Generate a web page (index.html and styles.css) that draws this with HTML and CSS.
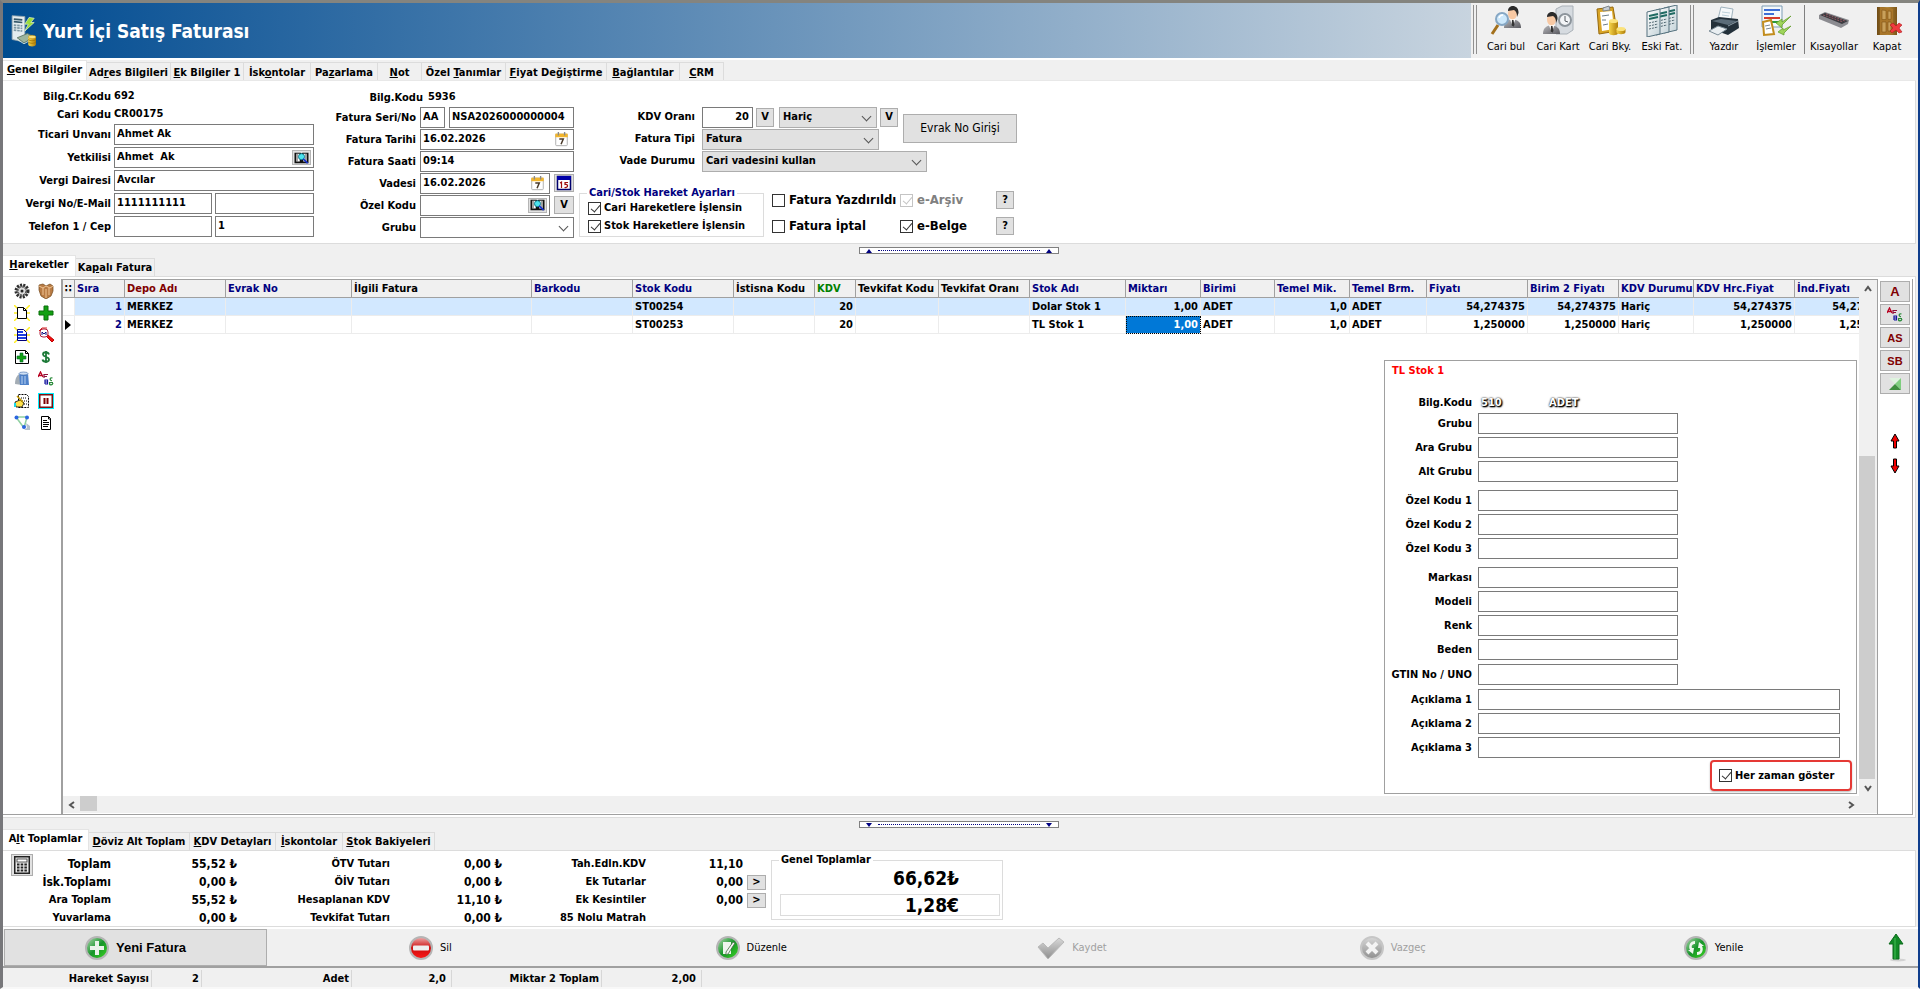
FILE: index.html
```html
<!DOCTYPE html>
<html lang="tr">
<head>
<meta charset="utf-8">
<title>Yurt İçi Satış Faturası</title>
<link rel="stylesheet" href="styles.css">
</head>
<body>
<svg class="sprite" aria-hidden="true">
  <defs>
    <linearGradient id="paper" x1="0" y1="0" x2="1" y2="1"><stop offset="0" stop-color="#ffffff"/><stop offset="1" stop-color="#c3d2d8"/></linearGradient>
    <linearGradient id="gold" x1="0" y1="0" x2="1" y2="0"><stop offset="0" stop-color="#f7d64a"/><stop offset="1" stop-color="#b07d08"/></linearGradient>
    <linearGradient id="suit" x1="0" y1="0" x2="1" y2="1"><stop offset="0" stop-color="#b9b9bd"/><stop offset="1" stop-color="#5a5a60"/></linearGradient>
    <linearGradient id="wood" x1="0" y1="0" x2="1" y2="0"><stop offset="0" stop-color="#6e4a14"/><stop offset="0.5" stop-color="#b58b3c"/><stop offset="1" stop-color="#7c5418"/></linearGradient>
    <linearGradient id="greenBall" x1="0" y1="0" x2="1" y2="1"><stop offset="0" stop-color="#b9dcb9"/><stop offset="0.5" stop-color="#17952a"/><stop offset="1" stop-color="#3edb20"/></linearGradient>
    <linearGradient id="redBall" x1="0" y1="0" x2="0" y2="1"><stop offset="0" stop-color="#efb0b0"/><stop offset="0.5" stop-color="#cc0d0d"/><stop offset="1" stop-color="#ff1a1a"/></linearGradient>
    <linearGradient id="greyBall" x1="0" y1="0" x2="0" y2="1"><stop offset="0" stop-color="#d8d8d8"/><stop offset="1" stop-color="#8e8e8e"/></linearGradient>
    <g id="person">
      <path d="M0 22c0-6 3-8 8-9c6 1 9 3 9 9z" fill="url(#suit)"/>
      <path d="M6 13l2.500 8l3-8z" fill="#fff"/><path d="M8 14h1.500l1 5l-1.500 2l-1.500-2z" fill="#333"/>
      <ellipse cx="8.500" cy="7.500" rx="4.500" ry="6" fill="#f8c9a4"/>
      <path d="M4 5c0-7 11-7 10.500 2l-1.500 4c0-4-1-6-3-7c-2 0-4 1-6 1z" fill="#2b2b2b"/>
    </g>
    <g id="sheet">
      <path d="M1 4l13-3v25l-13 3z" fill="url(#paper)" stroke="#54717e"/>
      <path d="M3 8l9-2M3 11l9-2" stroke="#1f6a62" stroke-width="2"/>
      <path d="M3 15l9-2M3 18l9-2M3 21l9-2" stroke="#4f6670" stroke-dasharray="2 1"/>
    </g>
    <symbol id="i-invoice" viewBox="0 0 32 40">
      <path d="M2 2l15 1v30l-15-3z" fill="#e4ecef" stroke="#8fa2ab"/>
      <path d="M4 6l10 1M4 9l10 1" stroke="#35586a" stroke-width="2"/><path d="M4 13l10 1M4 16l10 1M4 19l10 1" stroke="#7e97a3" stroke-width="2" stroke-dasharray="3 1"/>
      <path d="M22 4l6 1l-4 5l4 0l-11 10l4-8l-4 0z" fill="#9bdc3a" stroke="#e7f6c6" stroke-width=".8"/>
      <path d="M8 28l12-5l8 4l-12 7z" fill="#9db59d" stroke="#5c7463"/><path d="M8 30l8 5l11-6" fill="none" stroke="#e2eee2"/>
      <path d="M21 27v9c0 3 9 3 9 0v-9z" fill="url(#gold)"/><ellipse cx="25.500" cy="27" rx="4.500" ry="2" fill="#fbe27a" stroke="#b98709" stroke-width=".6"/><path d="M21 30c2 2 7 2 9 0M21 33c2 2 7 2 9 0" fill="none" stroke="#9b6d00" stroke-width=".8"/>
    </symbol>
    <symbol id="i-find" viewBox="0 0 32 32"><use href="#person" x="14" y="1"/><path d="M8 20l-6 9" stroke="#a3701c" stroke-width="3"/><circle cx="12" cy="14" r="6" fill="#cde8fb" stroke="#86a7c4" stroke-width="2"/><path d="M9 13q1-3 4-3" stroke="#fff" fill="none" stroke-width="1.500"/></symbol>
    <symbol id="i-card" viewBox="0 0 32 32"><path d="M14 4l6-3h11v24l-6 4h-11z" fill="#d6dbe0" stroke="#aab1b8"/><circle cx="23" cy="15" r="6" fill="#f3f5f7" stroke="#8d959c" stroke-width="2"/><path d="M23 11v5l3 1" stroke="#565d63" fill="none"/><use href="#person" x="1" y="7"/></symbol>
    <symbol id="i-balance" viewBox="0 0 32 32"><path d="M3 4l16-2l4 24l-18 3z" fill="#d9a425" stroke="#96690e"/><path d="M6 7l12-1l2 18l-12 2z" fill="#fff"/><path d="M9 3l6-2l1 4l-7 1z" fill="#c7cdd3" stroke="#7d858c"/><path d="M8 11l7-1M8 15l4 0M9 20l5-1" stroke="#6c7d88"/><path d="M15 16v12c0 3 9 3 9 0v-12z" fill="url(#gold)"/><ellipse cx="19.500" cy="16" rx="4.500" ry="2" fill="#fbe27a"/><path d="M22.500 24v3c0 3 9 3 9 0v-3z" fill="url(#gold)"/><ellipse cx="27" cy="24" rx="4.500" ry="2" fill="#fbe27a"/></symbol>
    <symbol id="i-old" viewBox="0 0 32 32"><use href="#sheet" x="17" y="-1"/><use href="#sheet" x="9" y="1"/><use href="#sheet" x="0" y="3"/></symbol>
    <symbol id="i-print" viewBox="0 0 32 32"><path d="M10 14l3-12l12 2l-2 12z" fill="#f5f8fa" stroke="#9fb2bd"/><path d="M14 7l8 1M14 10l7 1" stroke="#bcd0da"/><path d="M3 15l8-3l19 2l1 9l-11 7l-17-6z" fill="#23303a"/><path d="M4 16l9-2l16 2l-9 4z" fill="#5b6c79"/><path d="M20 21l10-5" stroke="#8c9ba6"/><path d="M1 26l9-5l9 3l-9 6z" fill="#e9eef1" stroke="#7b8c97"/></symbol>
    <symbol id="i-process" viewBox="0 0 32 32"><path d="M2 1h20v21h-20z" fill="#f4f8fb" stroke="#7d9db5"/><path d="M4 5h16M4 9h10" stroke="#3f6fd6" stroke-width="2"/><path d="M4 13h16" stroke="#d63a2a" stroke-width="2"/><path d="M8 17h13" stroke="#2a9a3b" stroke-width="2"/><path d="M3 17l8-2l3 14l-10 1z" fill="#fff" stroke="#c28c1c" stroke-width="2"/><path d="M5 21l5-1M6 24l5-1" stroke="#7d8a93"/><path d="M31 11l-9 6v-3l-6 4l6 5v-3zM31 21l-8 4v-2l-5 4l6 3v-2z" fill="#9fd45b" stroke="#5b9a22" stroke-width=".7"/></symbol>
    <symbol id="i-keyboard" viewBox="0 0 32 32"><path d="M1 10l6-3l24 8l-1 4l-7 4l-22-9z" fill="#8b8b90"/><path d="M2 10l5-2l23 8l-6 3z" fill="#3b3b40"/><path d="M5 10l20 7M8 9l19 7" stroke="#8f5860" stroke-dasharray="2 1"/></symbol>
    <symbol id="i-door" viewBox="0 0 32 32"><path d="M6 2h20v28h-20z" fill="url(#wood)"/><path d="M9 2l13 2v25l-13 1z" fill="#a9762a"/><path d="M11 5l4 .5v9h-4zM17 6l3 .3v8h-3zM11 17h4v10h-4zM17 17h3v9h-3z" fill="#c9a05a" stroke="#7f5517" stroke-width=".6"/><path d="M19 20l3-2l3 3l3-3l3 2l-3 3l3 4l-3 1l-3-3l-4 3l-2-2l3-3z" fill="#ee3b3f" stroke="#b3161c" stroke-width=".6"/></symbol>

    <symbol id="i-gear" viewBox="0 0 16 16"><circle cx="8" cy="8" r="6" fill="#b9b9b9" stroke="#2f2f2f" stroke-width="3" stroke-dasharray="2 1.200"/><circle cx="8" cy="8" r="4" fill="#dcdcdc" stroke="#333" stroke-dasharray="2 1"/><circle cx="8" cy="8" r="1.500" fill="#222"/></symbol>
    <symbol id="i-box" viewBox="0 0 16 16"><path d="M1 2l4-1l3 2l4-2l3 2v5l-2 5l-5 3l-5-3l-2-6z" fill="#b97c45" stroke="#714619" stroke-width=".7"/><path d="M1 3l4 2l3-2l4 2l3-2M5 5v7M8 6v9M11 5v7" fill="none" stroke="#f0c596"/></symbol>
    <symbol id="i-new" viewBox="0 0 16 16"><path d="M0 0l16 16M16 0l-16 16M0 8h16" stroke="#ffee22" stroke-width="1.500"/><path d="M3.500 2.500h6l3 3v8h-9z" fill="#fff" stroke="#000"/><path d="M9.500 2.500v3h3" fill="none" stroke="#000"/></symbol>
    <symbol id="i-newlines" viewBox="0 0 16 16"><path d="M0 0l16 16M16 0l-16 16M0 8h16" stroke="#ffee22" stroke-width="1.500"/><path d="M3.500 2.500h6l3 3v8h-9z" fill="#fff" stroke="#00007a"/><path d="M4 5h5M4 8h8M4 11h8" stroke="#1c3fe0" stroke-width="2"/></symbol>
    <symbol id="i-plus" viewBox="0 0 16 16"><path d="M6 1h4v5h5v4h-5v5h-4v-5h-5v-4h5z" fill="#12a012" stroke="#0b6e0b"/></symbol>
    <symbol id="i-probe" viewBox="0 0 16 16"><path d="M8 9l6 6l2-2l-6-5z" fill="#f01010" stroke="#c00000"/><rect x="2" y="2" width="8" height="8" rx="3" fill="#fff" stroke="#b01b3b"/><path d="M4 8v-3l2 2l2-2v3" fill="none" stroke="#101080"/><path d="M1 4l3-3h5" fill="none" stroke="#d02020"/></symbol>
    <symbol id="i-addpage" viewBox="0 0 16 16"><path d="M1.500 1.500h10l3 3v10h-13z" fill="#fff" stroke="#000"/><path d="M11.500 1.500v3h3" fill="none" stroke="#000"/><path d="M6 4h3v3h3v3h-3v3h-3v-3h-3v-3h3z" fill="#12a012" stroke="#063" stroke-width=".6"/></symbol>
    <symbol id="i-dollar" viewBox="0 0 16 16"><path d="M11 5.500c-1-3-6-3-6 0c0 2.500 6 2 6 5c0 3-6 3-6.500 0M8 2v12" fill="none" stroke="#1d7a38" stroke-width="1.800"/></symbol>
    <symbol id="i-bin" viewBox="0 0 16 16"><path d="M1 13c0-6 2-8 4-10l3 11z" fill="#a4adb5"/><path d="M5 2h9l1 12h-9z" fill="#4f82c9"/><ellipse cx="9.500" cy="2.500" rx="4.500" ry="1.500" fill="#cfe0f5" stroke="#3b68a8" stroke-width=".6"/><path d="M8 5v8M11 5v8" stroke="#b9d2f2"/></symbol>
    <symbol id="i-abc" viewBox="0 0 16 16"><path d="M0 6l2.500-5l2.500 5M1 4.500h3" fill="none" stroke="#b80020" stroke-width="1.300"/><path d="M6 7v-3.500h4M6 5.500h3" fill="none" stroke="#90103a" stroke-width="1.200"/><path d="M7 13v-4h2.500v2h-2.500M9.500 11v2h-2.500" fill="none" stroke="#1616a0" stroke-width="1.200"/><path d="M14.500 7c-3-1-3 3-.5 2.500M15 12c-1 3-4 2-3.500-.5h3.500" fill="none" stroke="#2a8a3a" stroke-width="1.200"/></symbol>
    <symbol id="i-edit" viewBox="0 0 16 16"><path d="M4.500 1.500h8l2 2v11h-10z" fill="#fff" stroke="#000" stroke-dasharray="2 1"/><path d="M7 5h6M8 8h5M8 11h5" stroke="#000" stroke-dasharray="1 1"/><path d="M1 9l5-2l4 3l-2 4h-6z" fill="#ffe14a" stroke="#000" stroke-width=".8"/><path d="M3 3l6 6" stroke="#c59a00" stroke-width="1.500"/><path d="M0 10h2v4h-2z" fill="#19d7e8"/></symbol>
    <symbol id="i-pause" viewBox="0 0 16 16"><rect x=".5" y=".5" width="15" height="15" fill="#7d1010" stroke="#00f0ff"/><rect x="2.500" y="2.500" width="11" height="11" fill="#fff"/><path d="M6.500 5v6M9.500 5v6" stroke="#7d0000" stroke-width="2"/></symbol>
    <symbol id="i-graph" viewBox="0 0 16 16"><path d="M2 2h11M2 2l8 11M13 2l-3 11" fill="none" stroke="#8fd0a0" stroke-width="1.500"/><circle cx="2.500" cy="2.500" r="2" fill="#2b66e0"/><circle cx="13" cy="2.500" r="2" fill="#2b66e0"/><circle cx="10" cy="12" r="2" fill="#2b66e0"/><path d="M12 8l4 3v4h-6l3-2z" fill="#b5c2cc"/></symbol>
    <symbol id="i-page" viewBox="0 0 16 16"><path d="M3.500 1.500h7l2 2v11h-9z" fill="#fff" stroke="#000"/><path d="M10.500 1.500v2.500h2" fill="none" stroke="#000"/><path d="M5 5.500h4M5 7.500h6M5 9.500h6M5 11.500h5" stroke="#000"/></symbol>

    <symbol id="i-cal7" viewBox="0 0 16 18"><rect x="1.500" y="3.500" width="13" height="13" rx="1" fill="#fff" stroke="#a8a8a8"/><path d="M1 3h14v4h-14z" fill="#f3b62c"/><path d="M4.500 1v4M11.500 1v4" stroke="#8a8a8a" stroke-width="1.500"/><path d="M5.500 9h4.500l-2.500 6" fill="none" stroke="#4a3a2a" stroke-width="1.700"/></symbol>
    <symbol id="i-cal15" viewBox="0 0 16 16"><rect x="1.500" y="1.500" width="13" height="13" fill="#fff" stroke="#00006e" stroke-width="1.500"/><path d="M1 1h14v4h-14z" fill="#0000a8"/><path d="M4 8l1.500-1v6M12 7.500h-3v2c3-1 4 3.500-.5 3" fill="none" stroke="#a01010" stroke-width="1.200"/></symbol>
    <symbol id="i-book" viewBox="0 0 18 16"><path d="M1 2h7l1 1l1-1h7v12h-16z" fill="#111"/><path d="M3 3h4v9h-4zM11 3h4v9h-4z" fill="#fff"/><path d="M4 3v9M14 3v9" stroke="#555"/><circle cx="9" cy="6.500" r="3.500" fill="#4be3ee" stroke="#0b6f80"/><path d="M11 9l5 5" stroke="#1530d0" stroke-width="2"/></symbol>
    <symbol id="i-calc" viewBox="0 0 16 18"><rect x=".75" y=".75" width="14.500" height="16.500" fill="#e9e9e9" stroke="#222" stroke-width="1.500"/><rect x="3" y="3" width="10" height="3" fill="#fff" stroke="#333" stroke-width=".8"/><path d="M3 8.500h10M3 11.500h10M3 14.500h10" stroke="#222" stroke-width="2" stroke-dasharray="2.500 1.200"/></symbol>

    <symbol id="i-b-add" viewBox="0 0 24 24"><circle cx="12" cy="12" r="11" fill="url(#greenBall)" stroke="#b5b5b5" stroke-width="2"/><path d="M10 5h4v5h5v4h-5v5h-4v-5h-5v-4h5z" fill="#eaf3ea"/></symbol>
    <symbol id="i-b-del" viewBox="0 0 24 24"><circle cx="12" cy="12" r="11" fill="url(#redBall)" stroke="#b5b5b5" stroke-width="2"/><rect x="4" y="9.500" width="16" height="5" rx="1" fill="#eee"/></symbol>
    <symbol id="i-b-edit" viewBox="0 0 24 24"><circle cx="12" cy="12" r="11" fill="url(#greenBall)" stroke="#b5b5b5" stroke-width="2"/><path d="M7 6h8v12h-8z" fill="#eef5ee"/><path d="M17 6l2 1l-7 11l-2 1v-3z" fill="#f4f4f4" stroke="#3c6b3c" stroke-width=".8"/></symbol>
    <symbol id="i-b-save" viewBox="0 0 28 24"><path d="M1 11l5-4l5 5l11-10l5 4l-16 17z" fill="url(#greyBall)" stroke="#b9b9b9"/></symbol>
    <symbol id="i-b-cancel" viewBox="0 0 24 24"><circle cx="12" cy="12" r="11" fill="url(#greyBall)" stroke="#c6c6c6" stroke-width="2"/><path d="M7 7l10 10M17 7l-10 10" stroke="#f4f4f4" stroke-width="4"/></symbol>
    <symbol id="i-b-refresh" viewBox="0 0 24 24"><circle cx="12" cy="12" r="11" fill="url(#greenBall)" stroke="#b5b5b5" stroke-width="2"/><path d="M11 5c-5 0-7 5-5 9h-2l5 4l1-6h-2c-1-3 1-4 3-4zM13 19c5 0 7-5 5-9h2l-5-4l-1 6h2c1 3-1 4-3 4z" fill="#eef7ee"/></symbol>
    <symbol id="i-up" viewBox="0 0 20 30"><ellipse cx="12" cy="27" rx="8" ry="1.500" fill="#d2d2d2"/><path d="M10 1l7 10h-4v15h-6v-15h-4z" fill="#128a26" stroke="#0a6a1a"/><path d="M9 5v21" stroke="#43bf55"/></symbol>
    <symbol id="i-redup" viewBox="0 0 10 16"><path d="M5 1l4 7h-2.500v7h-3v-7h-2.500z" fill="#f00000" stroke="#000"/></symbol>
    <symbol id="i-reddown" viewBox="0 0 10 16"><path d="M5 15l4-7h-2.500v-7h-3v7h-2.500z" fill="#f00000" stroke="#000"/></symbol>
    <symbol id="i-tri" viewBox="0 0 14 14"><path d="M0 0h14l-7 7z" fill="#dff3df"/><path d="M14 0v14l-7-7z" fill="#7fce7f"/><path d="M0 14h14l-7-7z" fill="#3f8f3f"/></symbol>
    <symbol id="i-chev" viewBox="0 0 8 8"><path d="M1 6l3-4l3 4" fill="none" stroke="#555" stroke-width="2"/></symbol>
  </defs>
</svg>

<div class="window">
  <header class="header">
    <div class="header-title">
      <svg class="title-icon"><use href="#i-invoice"/></svg>
      <h1>Yurt İçi Satış Faturası</h1>
    </div>
    <nav class="toolbar">
      <span class="sep double"></span>
      <button class="tool"><svg><use href="#i-find"/></svg>Cari bul</button>
      <button class="tool"><svg><use href="#i-card"/></svg>Cari Kart</button>
      <button class="tool"><svg><use href="#i-balance"/></svg>Cari Bky.</button>
      <button class="tool"><svg><use href="#i-old"/></svg>Eski Fat.</button>
      <span class="sep double"></span>
      <button class="tool"><svg><use href="#i-print"/></svg>Yazdır</button>
      <button class="tool"><svg><use href="#i-process"/></svg>İşlemler</button>
      <span class="sep"></span>
      <button class="tool wide"><svg><use href="#i-keyboard"/></svg>Kısayollar</button>
      <button class="tool"><svg><use href="#i-door"/></svg>Kapat</button>
    </nav>
  </header>

  <nav class="tabs tabs-main">
    <button class="tab active w84"><span><u>G</u>enel Bilgiler</span></button>
    <button class="tab w84"><span>Ad<u>r</u>es Bilgileri</span></button>
    <button class="tab w73"><span><u>E</u>k Bilgiler 1</span></button>
    <button class="tab w67"><span>İsk<u>o</u>ntolar</span></button>
    <button class="tab w67"><span>Pa<u>z</u>arlama</span></button>
    <button class="tab w44"><span><u>N</u>ot</span></button>
    <button class="tab w84"><span>Özel <u>T</u>anımlar</span></button>
    <button class="tab w101"><span><u>F</u>iyat Değiştirme</span></button>
    <button class="tab w73"><span><u>B</u>ağlantılar</span></button>
    <button class="tab w44"><span><u>C</u>RM</span></button>
  </nav>

  <section class="panel form">
    <div class="col col-customer">
      <span class="lbl">Bilg.Cr.Kodu</span><span>692</span>
      <span class="lbl">Cari Kodu</span><span>CR00175</span>
      <label class="lbl" for="unvan">Ticari Unvanı</label><input class="box" id="unvan" value="Ahmet Ak">
      <label class="lbl" for="yetkili">Yetkilisi</label>
      <div class="box combo"><input id="yetkili" value="Ahmet  Ak"><button class="inbtn" aria-label="Yetkili bul"><svg class="book"><use href="#i-book"/></svg></button></div>
      <label class="lbl" for="daire">Vergi Dairesi</label><input class="box" id="daire" value="Avcılar">
      <label class="lbl" for="vergino">Vergi No/E-Mail</label>
      <div class="pair"><input class="box" id="vergino" value="1111111111"><input class="box" aria-label="E-Mail"></div>
      <label class="lbl" for="tel">Telefon 1 / Cep</label>
      <div class="pair"><input class="box" id="tel"><input class="box" aria-label="Cep" value="1"></div>
    </div>

    <div class="col col-invoice">
      <span class="lbl wide-lbl">Bilg.Kodu</span><span class="code">5936</span>
      <label class="lbl" for="seri">Fatura Seri/No</label>
      <div class="serial"><input class="box" id="seri" value="AA"><input class="box" aria-label="Fatura No" value="NSA2026000000004"></div>
      <label class="lbl" for="tarih">Fatura Tarihi</label>
      <div class="box combo"><input id="tarih" value="16.02.2026"><svg class="cal"><use href="#i-cal7"/></svg></div>
      <label class="lbl" for="saat">Fatura Saati</label><input class="box" id="saat" value="09:14">
      <label class="lbl" for="vade">Vadesi</label>
      <div class="withbtn"><div class="box combo"><input id="vade" value="16.02.2026"><svg class="cal"><use href="#i-cal7"/></svg></div><button class="btn sq" aria-label="Vade takvimi"><svg class="ic16"><use href="#i-cal15"/></svg></button></div>
      <label class="lbl" for="ozel">Özel Kodu</label>
      <div class="withbtn"><div class="box combo"><input id="ozel"><button class="inbtn" aria-label="Özel kod bul"><svg class="book"><use href="#i-book"/></svg></button></div><button class="btn sq">V</button></div>
      <label class="lbl" for="grup">Grubu</label>
      <span class="select white"><select id="grup"><option></option></select></span>
    </div>

    <div class="col-options">
      <div class="options-top">
        <label class="lbl" for="kdv">KDV Oranı</label>
        <div class="kdv"><input class="box num" id="kdv" value="20"><button class="btn v">V</button><span class="select"><select aria-label="KDV Durumu"><option>Hariç</option></select></span><button class="btn v">V</button></div>
        <button class="btn evrak">Evrak No Girişi</button>
        <label class="lbl" for="tip">Fatura Tipi</label>
        <span class="select tip"><select id="tip"><option>Fatura</option></select></span>
        <label class="lbl" for="vdurum">Vade Durumu</label>
        <span class="select vdurum"><select id="vdurum"><option>Cari vadesini kullan</option></select></span>
      </div>
      <div class="options-bottom">
        <fieldset class="group">
          <legend>Cari/Stok Hareket Ayarları</legend>
          <label><input type="checkbox" checked>Cari Hareketlere İşlensin</label>
          <label><input type="checkbox" checked>Stok Hareketlere İşlensin</label>
        </fieldset>
        <div class="flags">
          <label><input type="checkbox">Fatura Yazdırıldı</label>
          <label class="off"><input type="checkbox" checked disabled>e-Arşiv</label>
          <button class="btn q">?</button>
          <label><input type="checkbox">Fatura İptal</label>
          <label><input type="checkbox" checked>e-Belge</label>
          <button class="btn q">?</button>
        </div>
      </div>
    </div>
  </section>

  <div class="splitter"><div class="handle up"><i></i><b></b><i></i></div></div>

  <nav class="tabs">
    <button class="tab active w73"><span><u>H</u>areketler</span></button>
    <button class="tab w79"><span>Ka<u>p</u>alı Fatura</span></button>
  </nav>

  <section class="panel moves">
    <aside class="side">
      <button aria-label="Ayarlar"><svg class="ic16"><use href="#i-gear"/></svg></button>
      <button aria-label="Stok"><svg class="ic16"><use href="#i-box"/></svg></button>
      <button aria-label="Yeni"><svg class="ic16"><use href="#i-new"/></svg></button>
      <button aria-label="Ekle"><svg class="ic16"><use href="#i-plus"/></svg></button>
      <button aria-label="Yeni satırlar"><svg class="ic16"><use href="#i-newlines"/></svg></button>
      <button aria-label="İncele"><svg class="ic16"><use href="#i-probe"/></svg></button>
      <button aria-label="Sayfa ekle"><svg class="ic16"><use href="#i-addpage"/></svg></button>
      <button aria-label="Döviz"><svg class="ic16"><use href="#i-dollar"/></svg></button>
      <button aria-label="Sil"><svg class="ic16"><use href="#i-bin"/></svg></button>
      <button aria-label="Harfler"><svg class="ic16"><use href="#i-abc"/></svg></button>
      <button aria-label="Düzenle"><svg class="ic16"><use href="#i-edit"/></svg></button>
      <button aria-label="Beklet"><svg class="ic16"><use href="#i-pause"/></svg></button>
      <button aria-label="Bağlantı"><svg class="ic16"><use href="#i-graph"/></svg></button>
      <button aria-label="Belge"><svg class="ic16"><use href="#i-page"/></svg></button>
    </aside>

    <div class="gridwrap">
      <div class="viewport">
        <table class="grid">
          <colgroup><col class="w12"><col class="w50"><col class="w101"><col class="w126"><col class="w180"><col class="w101"><col class="w101"><col class="w81"><col class="w41"><col class="w83"><col class="w91"><col class="w96"><col class="w75"><col class="w74"><col class="w75"><col class="w77"><col class="w101"><col class="w91"><col class="w75"><col class="w101"><col class="w99"></colgroup>
          <thead><tr><th class="k">∷</th><th>Sıra</th><th class="m">Depo Adı</th><th>Evrak No</th><th class="k">İlgili Fatura</th><th>Barkodu</th><th>Stok Kodu</th><th class="k">İstisna Kodu</th><th class="g">KDV</th><th class="k">Tevkifat Kodu</th><th class="k">Tevkifat Oranı</th><th>Stok Adı</th><th>Miktarı</th><th>Birimi</th><th>Temel Mik.</th><th>Temel Brm.</th><th>Fiyatı</th><th>Birim 2 Fiyatı</th><th>KDV Durumu</th><th>KDV Hrc.Fiyat</th><th>İnd.Fiyatı</th></tr></thead>
          <tbody>
            <tr class="alt"><td class="ind"></td><td class="r n">1</td><td>MERKEZ</td><td></td><td></td><td></td><td>ST00254</td><td></td><td class="r">20</td><td></td><td></td><td>Dolar Stok 1</td><td class="r">1,00</td><td>ADET</td><td class="r">1,0</td><td>ADET</td><td class="r">54,274375</td><td class="r">54,274375</td><td>Hariç</td><td class="r">54,274375</td><td class="r">54,274375</td></tr>
            <tr><td class="ind cur"></td><td class="r n">2</td><td>MERKEZ</td><td></td><td></td><td></td><td>ST00253</td><td></td><td class="r">20</td><td></td><td></td><td>TL Stok 1</td><td class="r sel">1,00</td><td>ADET</td><td class="r">1,0</td><td>ADET</td><td class="r">1,250000</td><td class="r">1,250000</td><td>Hariç</td><td class="r">1,250000</td><td class="r">1,250000</td></tr>
          </tbody>
        </table>

        <div class="detail">
          <h2>TL Stok 1</h2>
          <div class="fields">
            <span class="lbl">Bilg.Kodu</span><div class="codes"><span>510</span><span>ADET</span></div>
            <label class="lbl" for="d1">Grubu</label><input class="box" id="d1">
            <label class="lbl" for="d2">Ara Grubu</label><input class="box" id="d2">
            <label class="lbl" for="d3">Alt Grubu</label><input class="box" id="d3">
            <span class="brk"></span>
            <label class="lbl" for="d4">Özel Kodu 1</label><input class="box" id="d4">
            <label class="lbl" for="d5">Özel Kodu 2</label><input class="box" id="d5">
            <label class="lbl" for="d6">Özel Kodu 3</label><input class="box" id="d6">
            <span class="brk"></span>
            <label class="lbl" for="d7">Markası</label><input class="box" id="d7">
            <label class="lbl" for="d8">Modeli</label><input class="box" id="d8">
            <label class="lbl" for="d9">Renk</label><input class="box" id="d9">
            <label class="lbl" for="d10">Beden</label><input class="box" id="d10">
            <label class="lbl" for="d11">GTIN No / UNO</label><input class="box gtin" id="d11">
            <label class="lbl" for="d12">Açıklama 1</label><input class="box long" id="d12">
            <label class="lbl" for="d13">Açıklama 2</label><input class="box long" id="d13">
            <label class="lbl" for="d14">Açıklama 3</label><input class="box long" id="d14">
          </div>
          <label class="always"><input type="checkbox" checked>Her zaman göster</label>
        </div>
      </div>
      <div class="vbar">
        <button aria-label="Yukarı"><svg class="chev"><use href="#i-chev"/></svg></button>
        <span class="track"></span><span class="thumb"></span>
        <button aria-label="Aşağı"><svg class="chev down"><use href="#i-chev"/></svg></button>
      </div>
      <div class="hbar">
        <button aria-label="Sola"><svg class="chev left"><use href="#i-chev"/></svg></button>
        <span class="thumb"></span><span class="track"></span>
        <button aria-label="Sağa"><svg class="chev right"><use href="#i-chev"/></svg></button>
      </div>
    </div>

    <aside class="rail">
      <button class="btn big">A</button>
      <button class="btn" aria-label="Harfler"><svg class="ic16"><use href="#i-abc"/></svg></button>
      <button class="btn">AS</button>
      <button class="btn">SB</button>
      <button class="btn" aria-label="Renk"><svg class="tri"><use href="#i-tri"/></svg></button>
      <button class="arrow first" aria-label="Yukarı taşı"><svg><use href="#i-redup"/></svg></button>
      <button class="arrow" aria-label="Aşağı taşı"><svg><use href="#i-reddown"/></svg></button>
    </aside>
  </section>

  <div class="splitter"><div class="handle"><i></i><b></b><i></i></div></div>

  <nav class="tabs">
    <button class="tab active w86"><span>A<u>l</u>t Toplamlar</span></button>
    <button class="tab w101"><span><u>D</u>öviz Alt Toplam</span></button>
    <button class="tab w86"><span><u>K</u>DV Detayları</span></button>
    <button class="tab w67"><span><u>İ</u>skontolar</span></button>
    <button class="tab w92"><span><u>S</u>tok Bakiyeleri</span></button>
  </nav>

  <section class="panel totals">
    <button class="btn calc" aria-label="Hesap makinesi"><svg><use href="#i-calc"/></svg></button>
    <div class="sums">
      <span class="big">Toplam</span><span class="val">55,52 ₺</span><span>ÖTV Tutarı</span><span class="val">0,00 ₺</span><span>Tah.Edln.KDV</span><span class="val">11,10</span><span></span>
      <span class="big">İsk.Toplamı</span><span class="val">0,00 ₺</span><span>ÖİV Tutarı</span><span class="val">0,00 ₺</span><span>Ek Tutarlar</span><span class="val">0,00</span><button class="btn go">&gt;</button>
      <span>Ara Toplam</span><span class="val">55,52 ₺</span><span>Hesaplanan KDV</span><span class="val">11,10 ₺</span><span>Ek Kesintiler</span><span class="val">0,00</span><button class="btn go">&gt;</button>
      <span>Yuvarlama</span><span class="val">0,00 ₺</span><span>Tevkifat Tutarı</span><span class="val">0,00 ₺</span><span>85 Nolu Matrah</span><span></span><span></span>
    </div>
    <fieldset class="grand">
      <legend>Genel Toplamlar</legend>
      <div class="tl">66,62₺</div>
      <div class="eur">1,28€</div>
    </fieldset>
  </section>

  <footer class="actions">
    <button class="new"><svg class="ball"><use href="#i-b-add"/></svg>Yeni Fatura</button>
    <button><svg class="ball"><use href="#i-b-del"/></svg>Sil</button>
    <button><svg class="ball"><use href="#i-b-edit"/></svg>Düzenle</button>
    <button disabled><svg class="ball check"><use href="#i-b-save"/></svg>Kaydet</button>
    <button disabled><svg class="ball"><use href="#i-b-cancel"/></svg>Vazgeç</button>
    <button><svg class="ball"><use href="#i-b-refresh"/></svg>Yenile</button>
    <button class="top" aria-label="Yukarı"><svg class="uparrow"><use href="#i-up"/></svg></button>
  </footer>
  <div class="status">
    <span class="s148">Hareket Sayısı</span><span class="s51">2</span><span class="s150">Adet</span><span class="s100">2,0</span><span class="s150">Miktar 2 Toplam</span><span class="s100">2,00</span>
  </div>
</div>
</body>
</html>
```
FILE: styles.css
```css
* { box-sizing: border-box; }
body { margin: 0; font: bold 11px/14px "DejaVu Sans Condensed", "Noto Sans", sans-serif; color: #000; background: #f0f0f0; }
button, input, select { font: inherit; color: inherit; margin: 0; padding: 0; border-radius: 0; }
button { border: 0; background: none; }
h1, h2 { margin: 0; }
svg { display: block; flex: none; }
.sprite { position: absolute; width: 0; height: 0; }
.window { display: flex; flex-direction: column; height: 100vh; min-height: 760px; border: solid; border-width: 3px 2px 2px 3px; border-color: #84847f #0f3d8c #f8f8f8 #77777a; overflow: hidden; }
.lbl { text-align: right; white-space: nowrap; }
.ic16 { width: 16px; height: 16px; }

.header { display: flex; height: 57px; flex: none; border-bottom: 2px solid #fff; }
.header-title { flex: 1; display: flex; align-items: center; gap: 4px; padding: 1px 0 0 6px; background: linear-gradient(90deg, #004c8f 0, #0a5295 5%, #c8d4df 100%); color: #fff; }
.header-title h1 { font-size: 19px; line-height: 24px; }
.title-icon { width: 30px; height: 34px; }
.toolbar { display: flex; align-items: stretch; padding: 2px 5px 0 2px; font-weight: normal; }
.tool { width: 52px; display: flex; flex-direction: column; align-items: center; white-space: nowrap; font-weight: normal; gap: 3px; }
.tool.wide { width: 54px; }
.tool svg { width: 32px; height: 32px; }
.sep { width: 1px; height: 49px; background: #808080; margin: 0 2px; }
.sep.double { width: 4px; background: none; border: solid #909090; border-width: 0 1px; margin: 0 3px 0 0; }
.tool + .sep.double { margin: 0 4px 0 2px; }

.tabs { display: flex; align-items: flex-end; height: 21px; flex: none; }
.tabs-main { height: 20px; }
.tab { height: 18px; flex: none; padding: 0; border: 1px solid #dcdcdc; border-width: 1px 1px 0 0; white-space: nowrap; text-align: center; }
.tabs-main .tab { padding-top: 2px; }
.tabs .tab.active { height: 100%; background: #fff; padding: 0 0 2px; border-color: #e4e4e4; }
.panel { background: #fff; border: 1px solid #dcdcdc; border-left: 0; margin-right: 2px; flex: none; }

.box { height: 21px; border: 1px solid #7a7a7a; background: #fff; padding: 0 3px 2px 2px; width: 100%; min-width: 0; outline: 0; }
.combo { display: flex; align-items: center; gap: 2px; }
.combo input { border: 0; flex: 1; min-width: 0; height: 19px; outline: 0; background: none; padding-bottom: 2px; }
.box.combo { padding: 0 2px; }
.inbtn { width: 19px; height: 15px; border: 1px solid #b5b5b5; background: #e1e1e1; display: flex; justify-content: center; align-items: center; }
.book { width: 17px; height: 14px; }
.cal { width: 15px; height: 16px; margin-right: 2px; }
.btn { border: 1px solid #adadad; background: #e1e1e1; display: flex; align-items: center; justify-content: center; }
.select { display: block; position: relative; height: 21px; }
.select select { appearance: none; width: 100%; height: 100%; border: 1px solid #adadad; background: #e1e1e1; padding: 0 20px 0 3px; }
.select.white select { background: #fff; border-color: #7a7a7a; }
.select::after { content: ""; position: absolute; right: 7px; top: 6px; width: 6px; height: 6px; border: solid #555; border-width: 0 1px 1px 0; transform: rotate(45deg); pointer-events: none; }

input[type="checkbox"] { appearance: none; width: 13px; height: 13px; border: 1px solid #333; background: #fff; position: relative; flex: none; }
input[type="checkbox"]:checked::after { content: ""; position: absolute; left: 4px; top: 0; width: 4px; height: 8px; border: solid #333; border-width: 0 1px 1px 0; transform: rotate(40deg); }
input[type="checkbox"]:disabled, input[type="checkbox"]:disabled::after { border-color: #c4c4c4; }

.form { display: flex; height: 164px; border-top-color: #e8e8e8; }
.col { display: grid; align-items: center; white-space: nowrap; align-content: start; }
.col .lbl { padding-top: 1px; }
.col-customer { grid-template-columns: 108px 200px; grid-template-rows: 18px 18px repeat(5, 23px); column-gap: 3px; padding-top: 6px; }
.pair { display: grid; grid-template-columns: 98px 99px; gap: 3px; }
.col-invoice { grid-template-columns: 102px 154px; grid-template-rows: 18px repeat(6, 22px); column-gap: 4px; padding-top: 7px; }
.wide-lbl { margin-right: -7px; }
.code { padding-left: 8px; }
.serial { display: grid; grid-template-columns: 25px 125px; gap: 4px; }
.withbtn { display: grid; grid-template-columns: 130px 20px; gap: 4px; align-items: center; }
.sq { height: 18px; }
.col-options { padding-top: 25px; }
.options-top { display: grid; grid-template-columns: 128px 197px 118px; grid-template-rows: repeat(3, 22px); align-items: center; }
.options-top .lbl { padding-right: 7px; grid-column: 1; }
.options-top .evrak { grid-column: 3; grid-row: 1 / 3; height: 29px; margin-left: 4px; width: 114px; font-weight: normal; font-size: 12px; }
.kdv { display: grid; grid-template-columns: 51px 18px 100px 18px; column-gap: 3px; align-items: center; }
.kdv .select { margin-left: 2px; }
.num { text-align: right; }
.v { height: 19px; }
.tip { width: 177px; }
.vdurum { grid-column: 2 / 4; width: 225px; }
.options-bottom { display: flex; align-items: flex-start; padding: 14px 0 0 5px; gap: 8px; }
.group { width: 185px; margin: 0; border: 1px solid #dcdcdc; padding: 1px 8px 3px; display: flex; flex-direction: column; gap: 4px; }
.group legend { color: #000080; padding: 0 2px; margin-left: -1px; white-space: nowrap; }
.group label, .flags label { display: flex; align-items: center; gap: 3px; white-space: nowrap; }
.flags { display: grid; grid-template-columns: 128px 96px 18px; grid-template-rows: 26px 26px; align-items: center; font-size: 12px; padding-top: 1px; }
.flags label { gap: 4px; font-size: 13px; }
.off { color: #808080; }
.q { height: 18px; font-size: 11px; }

.splitter { height: 11px; flex: none; padding: 3px 4px 0 0; }
.handle { width: 200px; height: 7px; margin: 0 auto; border: 1px solid #808080; background: #fff; display: flex; align-items: center; justify-content: space-between; padding: 0 6px; }
.handle b { flex: 1; margin: 0 6px; border-top: 1px dotted #000080; }
.handle i { border: 3px solid transparent; border-bottom: 0; border-top: 4px solid #000080; }
.handle.up i { border-top: 0; border-bottom: 4px solid #000080; }

.moves { flex: 1; min-height: 0; display: flex; padding: 2px 2px 2px 0; }
.side { width: 58px; display: grid; grid-template-columns: 16px 16px; grid-auto-rows: 22px; column-gap: 8px; padding: 1px 0 0 11px; align-content: start; border-bottom: 1px solid #a0a0a0; }
.side button { display: flex; align-items: center; }
.gridwrap { flex: 1; min-width: 0; display: grid; grid-template-columns: minmax(0, 1fr) 18px; grid-template-rows: minmax(0, 1fr) 17px; border: solid #a0a0a0; border-width: 1px 1px 1px 2px; padding-bottom: 1px; }
.viewport { position: relative; overflow: hidden; }
.grid { border-collapse: separate; border-spacing: 0; table-layout: fixed; width: 1831px; white-space: nowrap; }
.grid th { height: 18px; padding: 0 0 0 2px; text-align: left; color: #000080; background: #f0f0f0; border-right: 1px solid #a0a0a0; border-bottom: 1px solid #a0a0a0; overflow: hidden; }
.grid th.k { color: #000; }
.grid th.m { color: #800000; }
.grid th.g { color: #008000; }
.grid td { height: 18px; padding: 0 2px; border-right: 1px solid #ececec; border-bottom: 1px solid #ececec; overflow: hidden; }
.grid .alt td { background: #d2e8ff; }
.grid .r { text-align: right; }
.grid .n { color: #000080; }
.grid .alt .ind { background: #fff; }
.cur::before { content: ""; display: block; border: 5px solid transparent; border-left: 6px solid #000; border-right: 0; }
.grid .sel { background: #0078d7; color: #fff; outline: 1px dotted #000; outline-offset: -1px; }
.w12 { width: 12px; } .w41 { width: 41px; } .w44 { width: 44px; } .w50 { width: 50px; } .w67 { width: 67px; } .w73 { width: 73px; } .w74 { width: 74px; } .w75 { width: 75px; } .w77 { width: 77px; } .w79 { width: 79px; } .w81 { width: 81px; } .w83 { width: 83px; } .w84 { width: 84px; } .w86 { width: 86px; } .w91 { width: 91px; } .w92 { width: 92px; } .w96 { width: 96px; } .w99 { width: 99px; } .w101 { width: 101px; } .w126 { width: 126px; } .w180 { width: 180px; }

.detail { position: absolute; right: 2px; bottom: 2px; width: 473px; border: 1px solid #a0a0a0; background: #fff; padding: 3px 4px 2px 0; display: flex; flex-direction: column; }
.detail h2 { font: inherit; color: #f00; padding-left: 7px; }
.fields { display: grid; grid-template-columns: 87px 1fr; column-gap: 6px; row-gap: 3px; align-items: center; padding-top: 18px; }
.fields .box { width: 200px; }
.fields .box.long { width: 362px; }
.fields .gtin { margin: 1px 0; }
.brk { grid-column: 1 / 3; height: 2px; }
.codes { display: grid; grid-template-columns: 68px auto; padding-left: 3px; color: #fff; text-shadow: 1px 1px 2px #000, 0 0 2px #000, 1px 1px 1px #000; }
.always { align-self: flex-end; margin-top: 2px; display: flex; align-items: center; gap: 3px; height: 31px; width: 142px; padding-left: 7px; border: 2px solid #e53935; border-radius: 4px; box-shadow: 0 1px 2px #bbb; white-space: nowrap; }

.vbar { display: flex; flex-direction: column; background: #f0f0f0; }
.vbar button, .hbar button { display: flex; align-items: center; justify-content: center; width: 17px; height: 17px; flex: none; }
.vbar .track { flex: 32; }
.vbar .thumb { flex: 65; background: #cdcdcd; margin-right: 2px; }
.hbar { grid-column: 1 / 3; display: flex; background: #f0f0f0; padding-right: 18px; }
.hbar .thumb { width: 17px; background: #cdcdcd; height: 15px; }
.hbar .track { flex: 1; }
.chev { width: 8px; height: 8px; }
.chev.down { transform: rotate(180deg); }
.chev.left { transform: rotate(-90deg); }
.chev.right { transform: rotate(90deg); }
.rail { width: 35px; padding: 2px 2px 0; display: flex; flex-direction: column; gap: 2px; align-items: stretch; border: solid #a0a0a0; border-width: 0 1px 1px 0; }
.rail .btn { height: 21px; color: #800000; font: bold 11px/14px "Liberation Sans", sans-serif; }
.rail .btn.big { font-size: 13px; }
.rail .tri { width: 12px; height: 12px; }
.arrow { display: flex; justify-content: center; margin-bottom: 7px; }
.arrow.first { margin-top: 37px; }
.arrow svg { width: 10px; height: 16px; }

.totals { display: flex; height: 77px; align-items: flex-start; padding-left: 8px; }
.calc { width: 22px; height: 22px; margin-top: 3px; }
.calc svg { width: 16px; height: 18px; }
.sums { display: grid; grid-template-columns: 78px 126px 153px 112px 144px 97px 23px; grid-auto-rows: 18px; align-items: center; text-align: right; white-space: nowrap; padding-top: 4px; }
.sums .big, .sums .val { font-size: 12px; }
.go { height: 15px; margin-left: 4px; }
.grand { width: 232px; height: 67px; margin: 2px 0 0 5px; padding: 0 2px 2px 8px; border: 1px solid #dcdcdc; text-align: right; }
.grand legend { text-align: left; padding: 0 2px; margin-left: -1px; }
.tl { font-size: 19px; line-height: 22px; padding-right: 41px; }
.eur { font-size: 19px; line-height: 20px; border: 1px solid #dcdcdc; padding-right: 40px; margin-top: 5px; }

.actions { display: flex; height: 41px; flex: none; background: #f0f0f0; border-top: 2px solid #fff; border-bottom: 2px solid #a0a0a0; padding-left: 1px; }
.actions button { flex: 1; display: flex; align-items: center; justify-content: center; gap: 7px; font-weight: normal; }
.actions button:disabled { color: #a0a0a0; }
.actions .new { flex: none; width: 263px; background: #e1e1e1; border: 1px solid #adadad; font: bold 13px/16px "Liberation Sans", sans-serif; margin-right: 3px; }
.actions .top { flex: none; width: 44px; }
.ball { width: 24px; height: 24px; }
.ball.check { width: 28px; }
.uparrow { width: 20px; height: 30px; }
.status { display: flex; height: 19px; flex: none; padding-top: 2px; }
.status span { border-right: 1px solid #d7d7d7; text-align: right; padding: 2px 2px 0 0; white-space: nowrap; }
.s148 { width: 149px; } .s51 { width: 50px; } .s150 { width: 150px; }
.status .s100 { width: 100px; padding-right: 5px; }
```
